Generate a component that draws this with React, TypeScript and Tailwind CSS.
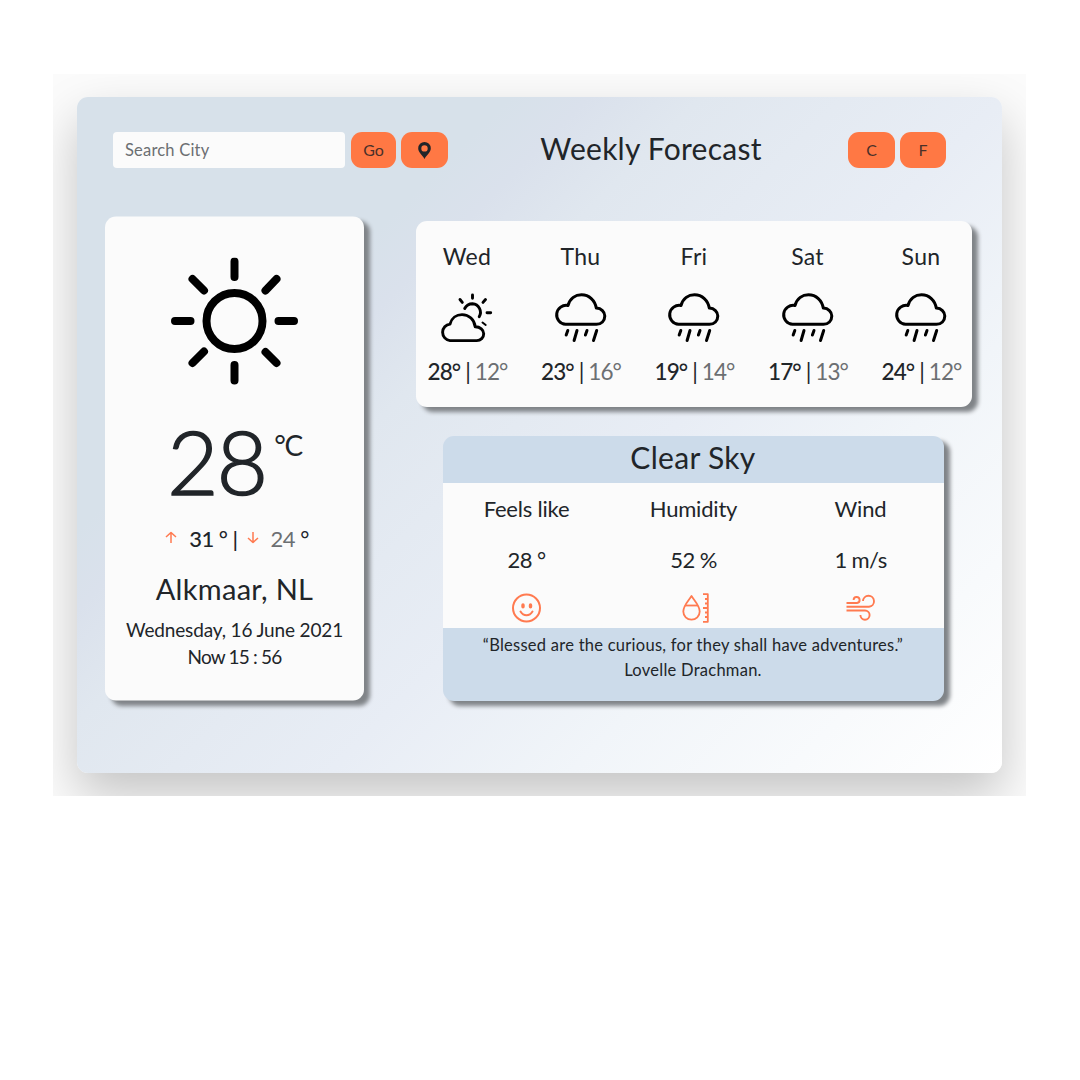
import React from "react";

const face = "font-['Lato','Open_Sans',sans-serif]";

function Sun() {
  return (
    <svg className="h-[128px] w-[128px]" viewBox="0 0 128 128" fill="none" stroke="#000" strokeWidth="8" strokeLinecap="round">
      <circle cx="63.500" cy="63.500" r="28" />
      <path d="M63.500 4v15.500M63.500 107.500v15.500M4 63.500h15.500M107.500 63.500h15.500M21.500 21.500l11.500 11.500M94.500 94.500l11 11M21.500 105.500l11.500-11.500M94.500 33l11-11.500" />
    </svg>
  );
}

function PartlyCloudy() {
  return (
    <svg className="h-[52px] w-[54px]" viewBox="0.5 0 54 52" fill="none" stroke="#000" strokeWidth="2.900" strokeLinecap="round" strokeLinejoin="round">
      <path d="M10.500 48.600a8.300 8.300 0 0 1 0-16.500C12 26 17 22.600 22.500 22.600c7 0 12.500 5 13.200 12.200 5 0 8.500 3 8.500 6.900s-3 6.900-7 6.900z" />
      <path d="M25.200 16.500c1.600-3.200 4.400-4.800 7.800-4.800a8.600 8.600 0 0 1 6.700 13" />
      <path d="M33 3v3.200M20.500 7.500l2.300 2.900M46 7.500l-2.500 2.900M47.500 20.700h3.700" />
      <path d="M43 30.500l3.200 2.500" strokeWidth="2" />
    </svg>
  );
}

function Rain() {
  return (
    <svg className="h-[52px] w-[54px]" viewBox="1 0 54 52" fill="none" stroke="#000" strokeWidth="3" strokeLinecap="round" strokeLinejoin="round">
      <path d="M12.500 32.300A9.500 9.500 0 1 1 15 13.500C17 6.500 22.500 2.800 28.500 2.800c7.700 0 13.500 5.500 14.800 13.300 5 .3 8.500 3.700 8.500 8 0 4.700-3.500 8.200-8.300 8.200z" />
      <path d="M14.800 38.500l-1.600 4.500M24 38.500l-2.900 10M34 38.500l-1.600 4.500M43.700 38.500l-3.200 10" />
    </svg>
  );
}

function Smile() {
  return (
    <svg className="h-[30px] w-[30px]" viewBox="-1 -0.5 30 30" fill="none" stroke="#ff7a50" strokeWidth="2" strokeLinecap="round">
      <circle cx="14.500" cy="14.500" r="13.500" />
      <path d="M8.500 18c3 5 9 5 12 0" />
      <path d="M11 11.500v1.800M18.500 11.500v1.800" strokeWidth="3.400" />
    </svg>
  );
}

function Humidity() {
  return (
    <svg className="h-[30px] w-[30px] overflow-visible" viewBox="-1.5 0 30 30" fill="none" stroke="#ff7a50" strokeWidth="1.800" strokeLinejoin="round">
      <path d="M12 3C9 8 3.800 12.500 3.800 18.500a8.200 8.200 0 0 0 16.400 0C20.200 12.500 15 8 12 3z" />
      <path d="M5.500 12.500h13" />
      <path d="M23.500 1.200h4.800v27.600h-4.800M25.500 6h3M25.500 10.500h3M23.500 15h5M25.500 19.500h3M25.500 24h3" />
    </svg>
  );
}

function WindIcon() {
  return (
    <svg className="h-[30px] w-[30px] overflow-visible" viewBox="-1 0.5 30 30" fill="none" stroke="#ff7a50" strokeWidth="1.900">
      <path d="M.5 10.500h10.500a3 3 0 1 0-3.400-3" />
      <path d="M.5 14.200h22.500a5.500 5.500 0 1 0-6-5.600" />
      <path d="M.5 18h18.500a4.600 4.600 0 1 1-4.600 4.600" />
    </svg>
  );
}

function Arrow({ down = false }: { down?: boolean }) {
  return (
    <svg className="h-[12px] w-[12px]" viewBox="0 0 12 12" fill="none" stroke="#ff7a50" strokeWidth="1.500">
      <path d={down ? "M6 .5v10.500M1 6.500L6 11l5-4.500" : "M6 11.500V1M1 5.500L6 1l5 4.500"} />
    </svg>
  );
}

const days = [
  { name: "Wed", high: 28, low: 12, icon: <PartlyCloudy /> },
  { name: "Thu", high: 23, low: 16, icon: <Rain /> },
  { name: "Fri", high: 19, low: 14, icon: <Rain /> },
  { name: "Sat", high: 17, low: 13, icon: <Rain /> },
  { name: "Sun", high: 24, low: 12, icon: <Rain /> },
];

const details = [
  { label: "Feels like", value: "28 °", icon: <Smile /> },
  { label: "Humidity", value: "52 %", icon: <Humidity /> },
  { label: "Wind", value: "1 m/s", icon: <WindIcon /> },
];

const button = "flex h-9 items-center justify-center rounded-[11px] bg-[#ff7844] text-[16px] text-[#4a3029]";

export default function App() {
  return (
    <div className={`h-[1080px] w-[1080px] bg-white pl-[53px] pt-[74px] text-[#212529] ${face}`}>
      <div className="h-[722px] w-[973px] overflow-hidden bg-[#fbfbfb] pl-6 pt-[23px]">
        <main className="h-[676px] w-[925px] rounded-[11px] bg-[linear-gradient(135deg,#d7e1ea_0%,#d7e1ea_27%,#dae1ec_32%,#e0e7ef_39%,#e4eaf2_48%,#e8edf5_58%,#f1f5f9_73%,#ffffff_100%)] shadow-[0_22px_50px_rgba(0,0,0,0.22)]">
          <header className="flex h-[119px] items-start pl-9 pt-[35px]">
            <input className="h-9 w-[232px] rounded-[4px] bg-[#fbfbfb] px-3 text-[16.500px] tracking-[0.200px] placeholder:text-[#6c6f72]" placeholder="Search City" />
            <button className={`${button} ml-[6px] w-[45px]`}>Go</button>
            <button className={`${button} ml-[5px] w-[47px]`} aria-label="Use my location">
              <svg className="h-[17px] w-[13px]" viewBox="0 0 13 17"><path fillRule="evenodd" fill="#212529" d="M6.500 0A6.300 6.300 0 0 0 .2 6.300C.2 10.500 4 12.500 6.500 17c2.500-4.500 6.300-6.500 6.300-10.700A6.300 6.300 0 0 0 6.500 0zm0 3.200a3.200 3.200 0 1 1 0 6.400 3.200 3.200 0 0 1 0-6.400z" /></svg>
            </button>
            <h1 className="-mt-[2px] ml-[92px] w-[222px] whitespace-nowrap text-center text-[30px] leading-9 tracking-[0.250px]">Weekly Forecast</h1>
            <button className={`${button} ml-[86px] w-[47px]`}>C</button>
            <button className={`${button} ml-[5px] w-[46px]`}>F</button>
          </header>

          <div className="flex pl-7">
            <section className="flex h-[484px] w-[259px] translate-y-[0.500px] flex-col items-center rounded-[11px] bg-[#fbfbfb] pt-[41px] shadow-[6px_5px_4px_#808488]">
              <Sun />
              <div className="mt-[30px] flex h-[97px] items-start">
                <span className="text-[89px] font-light leading-[90px] tracking-[-2px] [-webkit-text-stroke:1.500px_#212529]">28</span>
                <span className="ml-[8px] mt-[9px] text-[28px] leading-[40px] tracking-[-1.200px]">°C</span>
              </div>
              <div className="mt-[9px] flex h-[32px] items-center whitespace-pre pl-[5px] text-[22px] tracking-[-0.500px]">
                <Arrow /><span className="ml-[12px] font-medium">31 ° | </span>
                <span className="ml-[4px]"><Arrow down /></span><span className="ml-[12px] text-[#6c6f72]">24 </span><span>°</span>
              </div>
              <h2 className="mt-[16px] text-[29px] leading-[38px] tracking-[0.300px]">Alkmaar, NL</h2>
              <p className="mt-[8px] whitespace-nowrap text-center text-[19px] leading-[27px] tracking-[-0.150px]">Wednesday, 16 June 2021<br /><span className="tracking-[-0.800px]">Now 15 : 56</span></p>
            </section>

            <div className="ml-[52px] flex flex-col items-center pt-[5px]">
              <section className="grid h-[186px] w-[556px] grid-cols-[102px_125px_102px_125px_102px] rounded-[11px] bg-[#fbfbfb] shadow-[6px_5px_4px_#808488]">
                {days.map((day) => (
                  <div key={day.name} className="flex flex-col items-center pt-[19px]">
                    <h3 className="text-[23px] leading-[32px] tracking-[0.300px]">{day.name}</h3>
                    <div className="mt-[20px]">{day.icon}</div>
                    <p className="mt-[12px] whitespace-nowrap pl-[1px] text-[22.500px] leading-[32px] tracking-[-0.900px]"><span className="font-medium">{day.high}°</span> | <span className="text-[#6c6f72]">{day.low}°</span></p>
                  </div>
                ))}
              </section>

              <section className="mr-[2px] mt-[29px] h-[265px] w-[501px] overflow-hidden rounded-[11px] bg-[#ccdbea] shadow-[6px_5px_4px_#808488]">
                <h2 className="h-[47px] text-center text-[30px] leading-[42px] tracking-[0.300px]">Clear Sky</h2>
                <div className="grid h-[145px] grid-cols-3 bg-[#fbfbfb]">
                  {details.map((item) => (
                    <div key={item.label} className="flex flex-col items-center pt-[11px] text-[22px]">
                      <h3 className="pl-px leading-[30px] tracking-[-0.200px]">{item.label}</h3>
                      <p className="mt-[21px] pl-px leading-[30px] tracking-[-0.600px]">{item.value}</p>
                      <div className="mt-[18px]">{item.icon}</div>
                    </div>
                  ))}
                </div>
                <p className="whitespace-nowrap pt-[5px] text-center text-[16.500px] leading-[24.500px] tracking-[0.260px]">“Blessed are the curious, for they shall have adventures.”<br />Lovelle Drachman.</p>
              </section>
            </div>
          </div>
        </main>
      </div>
    </div>
  );
}
